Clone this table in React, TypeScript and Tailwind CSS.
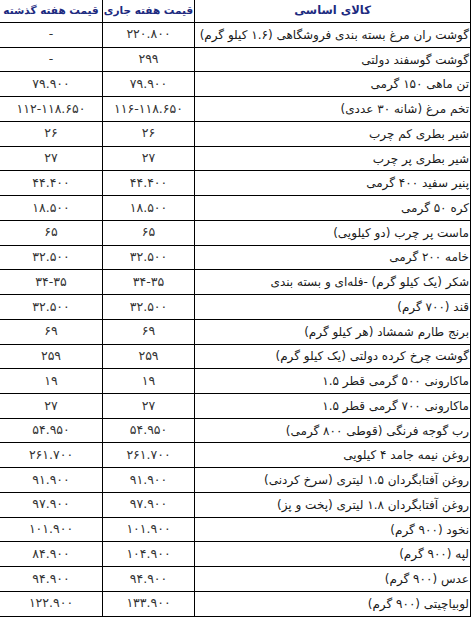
import React from 'react'

type Row = { name: string; now: string; prev: string }

const rows: Row[] = [
  { name: 'گوشت ران مرغ بسته بندی فروشگاهی (۱.۶ کیلو گرم)', now: '۲۲۰.۸۰۰', prev: '-' },
  { name: 'گوشت گوسفند دولتی', now: '۲۹۹', prev: '-' },
  { name: 'تن ماهی ۱۵۰ گرمی', now: '۷۹.۹۰۰', prev: '۷۹.۹۰۰' },
  { name: 'تخم مرغ (شانه ۳۰ عددی)', now: '۱۱۶-۱۱۸.۶۵۰', prev: '۱۱۲-۱۱۸.۶۵۰' },
  { name: 'شیر بطری کم چرب', now: '۲۶', prev: '۲۶' },
  { name: 'شیر بطری پر چرب', now: '۲۷', prev: '۲۷' },
  { name: 'پنیر سفید ۴۰۰ گرمی', now: '۴۴.۴۰۰', prev: '۴۴.۴۰۰' },
  { name: 'کره ۵۰ گرمی', now: '۱۸.۵۰۰', prev: '۱۸.۵۰۰' },
  { name: 'ماست پر چرب (دو کیلویی)', now: '۶۵', prev: '۶۵' },
  { name: 'خامه ۲۰۰ گرمی', now: '۳۲.۵۰۰', prev: '۳۲.۵۰۰' },
  { name: 'شکر (یک کیلو گرم) -فله‌ای و بسته بندی', now: '۳۴-۳۵', prev: '۳۴-۳۵' },
  { name: 'قند (۷۰۰ گرم)', now: '۳۲.۵۰۰', prev: '۳۲.۵۰۰' },
  { name: 'برنج طارم شمشاد (هر کیلو گرم)', now: '۶۹', prev: '۶۹' },
  { name: 'گوشت چرخ کرده دولتی (یک کیلو گرم)', now: '۲۵۹', prev: '۲۵۹' },
  { name: 'ماکارونی ۵۰۰ گرمی قطر ۱.۵', now: '۱۹', prev: '۱۹' },
  { name: 'ماکارونی ۷۰۰ گرمی قطر ۱.۵', now: '۲۷', prev: '۲۷' },
  { name: 'رب گوجه فرنگی (قوطی ۸۰۰ گرمی)', now: '۵۴.۹۵۰', prev: '۵۴.۹۵۰' },
  { name: 'روغن نیمه جامد ۴ کیلویی', now: '۲۶۱.۷۰۰', prev: '۲۶۱.۷۰۰' },
  { name: 'روغن آفتابگردان ۱.۵ لیتری (سرخ کردنی)', now: '۹۱.۹۰۰', prev: '۹۱.۹۰۰' },
  { name: 'روغن آفتابگردان ۱.۸ لیتری (پخت و پز)', now: '۹۷.۹۰۰', prev: '۹۷.۹۰۰' },
  { name: 'نخود (۹۰۰ گرم)', now: '۱۰۱.۹۰۰', prev: '۱۰۱.۹۰۰' },
  { name: 'لپه (۹۰۰ گرم)', now: '۱۰۴.۹۰۰', prev: '۸۴.۹۰۰' },
  { name: 'عدس (۹۰۰ گرم)', now: '۹۴.۹۰۰', prev: '۹۴.۹۰۰' },
  { name: 'لوبیاچیتی (۹۰۰ گرم)', now: '۱۳۳.۹۰۰', prev: '۱۲۲.۹۰۰' },
]

export default function App() {
  return (
    <div className="w-[473px] h-[617px] overflow-hidden bg-white font-['DejaVu_Sans',sans-serif]">
      <div dir="rtl" className="w-[471px]">
        {/* header */}
        <div className="grid grid-cols-[277px_92px_102px] h-[23px] border-b border-black text-[10.5px] font-bold text-[#1c2a80]">
          <div className="flex items-center justify-center border-x border-black text-[11.5px]">کالای اساسی</div>
          <div className="flex items-center justify-center border-l border-black whitespace-nowrap">قیمت هفته جاری</div>
          <div className="flex items-center justify-center whitespace-nowrap">قیمت هفته گذشته</div>
        </div>

        {rows.map((r) => (
          <div
            key={r.name}
            className="grid grid-cols-[277px_92px_102px] h-[24.74px] border-b border-black text-[12px] text-[#1a1a1a]"
          >
            <div className="flex items-center pr-[1px] border-x border-black whitespace-nowrap">{r.name}</div>
            <div className="flex items-center justify-center border-l border-black text-[12.5px] text-[#333]">{r.now}</div>
            <div className="flex items-center justify-center text-[12.5px] text-[#333]">{r.prev}</div>
          </div>
        ))}
      </div>
    </div>
  )
}
